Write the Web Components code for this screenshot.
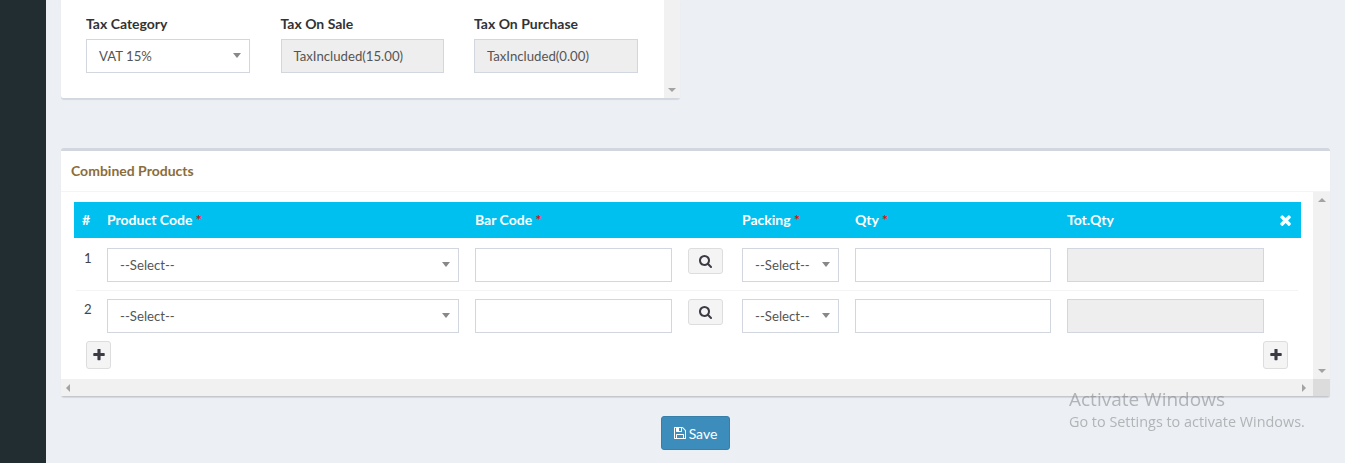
<!DOCTYPE html>
<html>
<head>
<meta charset="utf-8">
<style>
  html, body { margin: 0; height: 100%; overflow: hidden; background: #ecf0f5; }
  body { font-family: "Lato", "Liberation Sans", sans-serif; font-size: 14px; color: #444; }
</style>
</head>
<body>
<app-shell>
  <tax-card>
    <form-field label="Tax Category"><form-select>VAT 15%</form-select></form-field>
    <form-field label="Tax On Sale"><form-box disabled>TaxIncluded(15.00)</form-box></form-field>
    <form-field label="Tax On Purchase"><form-box disabled>TaxIncluded(0.00)</form-box></form-field>
  </tax-card>
  <products-card title-text="Combined Products">
    <product-row num="1"></product-row>
    <product-row num="2"></product-row>
  </products-card>
  <save-button></save-button>
</app-shell>
<activate-notice></activate-notice>

<script>
const ICONS = {
  search: ['0 0 1664 1664', 'M1152 704q0-185-131.5-316.5t-316.5-131.5-316.5 131.5-131.5 316.5 131.5 316.5 316.5 131.5 316.5-131.5 131.5-316.5zm512 832q0 52-38 90t-90 38q-54 0-90-38l-343-342q-179 124-399 124-143 0-273.5-55.5t-225-150-150-225-55.5-273.5 55.5-273.5 150-225 225-150 273.5-55.5 273.5 55.5 225 150 150 225 55.5 273.5q0 220-124 399l343 343q37 37 37 90z'],
  plus: ['160 160 1472 1472', 'M1600 736v192q0 40-28 68t-68 28h-416v416q0 40-28 68t-68 28h-192q-40 0-68-28t-28-68v-416h-416q-40 0-68-28t-28-68v-192q0-40 28-68t68-28h416v-416q0-40 28-68t68-28h192q40 0 68 28t28 68v416h416q40 0 68 28t28 68z'],
  times: ['200 240 1100 1320', 'M1298 1322q0 40-28 68l-136 136q-28 28-68 28t-68-28l-294-294-294 294q-28 28-68 28t-68-28l-136-136q-28-28-28-68t28-68l294-294-294-294q-28-28-28-68t28-68l136-136q28-28 68-28t68 28l294 294 294-294q28-28 68-28t68 28l136 136q28 28 28 68t-28 68l-294 294 294 294q28 28 28 68z'],
  save: ['0 128 1536 1536', 'M384 1536h768v-384h-768v384zm896 0h128v-896q0-14-10-38.5t-20-34.5l-281-281q-10-10-34-20t-39-10v416q0 40-28 68t-68 28h-576q-40 0-68-28t-28-68v-416h-128v1280h128v-416q0-40 28-68t68-28h832q40 0 68 28t28 68v416zm-384-928v-320q0-13-9.5-22.5t-22.5-9.5h-192q-13 0-22.5 9.5t-9.5 22.5v320q0 13 9.5 22.5t22.5 9.5h192q13 0 22.5-9.5t9.5-22.5zm640 32v928q0 40-28 68t-68 28h-1344q-40 0-68-28t-28-68v-1344q0-40 28-68t68-28h928q40 0 88 20t76 48l280 280q28 28 48 76t20 88z']
}

function icon (name, size, color) {
  const [box, d] = ICONS[name]
  return `<svg width="${size}" height="${size}" viewBox="${box}" fill="${color}" style="display:block"><path d="${d}"/></svg>`
}

class AppShell extends HTMLElement {
  constructor () {
    super()
    this.attachShadow({ mode: 'open' })
  }

  connectedCallback () {
    this.shadowRoot.innerHTML = `
      <style>
        :host { display: flex; height: 463px; }
        .sidebar { width: 46px; flex: none; background: #222d32; }
        .main {
          flex: 1;
          padding: 0 15px;
          display: flex;
          flex-direction: column;
          align-items: stretch;
        }
      </style>
      <div class="sidebar"></div>
      <div class="main"><slot></slot></div>
    `
  }
}

class ScrollArrow extends HTMLElement {
  constructor () {
    super()
    this.attachShadow({ mode: 'open' })
  }

  connectedCallback () {
    const dir = this.getAttribute('dir') || 'down'
    const sides = {
      down: 'border-left:4px solid transparent;border-right:4px solid transparent;border-top:4px solid #a3a3a3',
      up: 'border-left:4px solid transparent;border-right:4px solid transparent;border-bottom:4px solid #a3a3a3',
      left: 'border-top:4px solid transparent;border-bottom:4px solid transparent;border-right:4px solid #a3a3a3',
      right: 'border-top:4px solid transparent;border-bottom:4px solid transparent;border-left:4px solid #a3a3a3'
    }
    this.shadowRoot.innerHTML = `
      <style>
        :host { display: block; width: 0; height: 0; ${sides[dir]} }
      </style>
    `
  }
}

class TaxCard extends HTMLElement {
  constructor () {
    super()
    this.attachShadow({ mode: 'open' })
  }

  connectedCallback () {
    this.shadowRoot.innerHTML = `
      <style>
        :host {
          display: flex;
          width: 619px;
          height: 98px;
          margin-bottom: 49px;
          background: #fff;
          border-bottom: 1px solid #d2d6de;
          box-shadow: 0 1px 1px rgba(0, 0, 0, .1);
          border-radius: 0 0 3px 3px;
        }
        .fields {
          flex: 1;
          display: grid;
          grid-template-columns: 164px 163px 164px;
          column-gap: 30.5px;
          align-content: start;
          padding: 15px 0 0 25px;
        }
        .bar {
          width: 16px;
          flex: none;
          background: #f1f1f1;
          display: flex;
          justify-content: center;
          align-items: flex-end;
          padding-bottom: 6px;
          box-sizing: border-box;
        }
      </style>
      <div class="fields"><slot></slot></div>
      <div class="bar"><scroll-arrow dir="down"></scroll-arrow></div>
    `
  }
}

class FormField extends HTMLElement {
  constructor () {
    super()
    this.attachShadow({ mode: 'open' })
  }

  connectedCallback () {
    this.shadowRoot.innerHTML = `
      <style>
        :host { display: block; }
        label {
          display: block;
          height: 24px;
          line-height: 18px;
          font-weight: 700;
          font-size: 14px;
          color: #333;
        }
      </style>
      <label>${this.getAttribute('label')}</label>
      <slot></slot>
    `
  }
}

class FormBox extends HTMLElement {
  constructor () {
    super()
    this.attachShadow({ mode: 'open' })
  }

  connectedCallback () {
    this.shadowRoot.innerHTML = `
      <style>
        :host {
          display: flex;
          align-items: center;
          height: 34px;
          box-sizing: border-box;
          padding: 0 12px 1px;
          background: #fff;
          border: 1px solid #d2d6de;
          font-size: 13.2px;
          color: #555;
          white-space: nowrap;
        }
        :host([disabled]) { background: #eee; }
      </style>
      <slot></slot>
    `
  }
}

class FormSelect extends HTMLElement {
  constructor () {
    super()
    this.attachShadow({ mode: 'open' })
  }

  connectedCallback () {
    this.shadowRoot.innerHTML = `
      <style>
        :host {
          display: flex;
          align-items: center;
          justify-content: space-between;
          height: 34px;
          box-sizing: border-box;
          padding: 0 8px 1px 12px;
          background: #fff;
          border: 1px solid #d2d6de;
          font-size: 13.2px;
          color: #555;
          white-space: nowrap;
        }
        .caret {
          width: 0;
          height: 0;
          border-left: 4px solid transparent;
          border-right: 4px solid transparent;
          border-top: 5px solid #888;
        }
      </style>
      <slot></slot>
      <span class="caret"></span>
    `
  }
}

class IconButton extends HTMLElement {
  constructor () {
    super()
    this.attachShadow({ mode: 'open' })
  }

  connectedCallback () {
    const name = this.getAttribute('icon')
    const size = this.getAttribute('size') || 12
    this.shadowRoot.innerHTML = `
      <style>
        :host {
          display: flex;
          align-items: center;
          justify-content: center;
          box-sizing: border-box;
          background: #f4f4f4;
          border: 1px solid #ddd;
          border-radius: 3px;
        }
      </style>
      ${icon(name, size, '#3b3b45')}
    `
  }
}

class ProductsCard extends HTMLElement {
  constructor () {
    super()
    this.attachShadow({ mode: 'open' })
  }

  connectedCallback () {
    this.shadowRoot.innerHTML = `
      <style>
        :host {
          display: block;
          height: 249px;
          box-sizing: border-box;
          background: #fff;
          border-top: 3px solid #d2d6de;
          border-bottom: 1px solid #c4c8ce;
          box-shadow: 0 1px 1px rgba(0, 0, 0, .1);
          border-radius: 3px;
        }
        .title {
          height: 41px;
          box-sizing: border-box;
          padding-left: 10px;
          line-height: 39px;
          font-size: 14px;
          font-weight: 700;
          color: #8a6d3b;
          border-bottom: 1px solid #f4f4f4;
        }
        .frame {
          height: 204px;
          display: grid;
          grid-template-columns: 1fr 17px;
          grid-template-rows: 1fr 17px;
        }
        .content { padding: 10px 0 0 13px; min-width: 0; }
        .head, .foot { display: grid; width: 1227px; }
        .head {
          grid-template-columns: 33px 368px 213px 54px 113px 212px 197px 37px;
          height: 36px;
          margin-bottom: 2px;
          align-items: center;
          background: #00c0ef;
          color: #fff;
          font-weight: 700;
          font-size: 14px;
        }
        .head span { padding-bottom: 1px; }
        .head span:first-child { padding-left: 8px; }
        .head i { color: #f00; font-style: normal; font-size: 14px; }
        .head .x { display: flex; padding-left: 16px; padding-bottom: 0; }
        .foot {
          grid-template-columns: 1fr 25px 13px;
        }
        .foot icon-button { width: 25px; height: 28px; }
        .foot icon-button:first-child { margin-left: 12px; grid-column: 1; }
        .vbar, .hbar { background: #f1f1f1; display: flex; align-items: center; justify-content: space-between; }
        .vbar { flex-direction: column; padding: 6px 0; box-sizing: border-box; }
        .hbar { padding: 0 7px 0 5px; }
        .corner { background: #dcdcdc; }
      </style>
      <div class="title">${this.getAttribute('title-text')}</div>
      <div class="frame">
        <div class="content">
          <div class="head">
            <span>#</span>
            <span>Product Code <i>*</i></span>
            <span>Bar Code <i>*</i></span>
            <span></span>
            <span>Packing <i>*</i></span>
            <span>Qty <i>*</i></span>
            <span>Tot.Qty</span>
            <span class="x">${icon('times', 12, '#fff')}</span>
          </div>
          <slot></slot>
          <div class="foot">
            <icon-button icon="plus" size="12"></icon-button>
            <icon-button icon="plus" size="12"></icon-button>
          </div>
        </div>
        <div class="vbar"><scroll-arrow dir="up"></scroll-arrow><scroll-arrow dir="down"></scroll-arrow></div>
        <div class="hbar"><scroll-arrow dir="left"></scroll-arrow><scroll-arrow dir="right"></scroll-arrow></div>
        <div class="corner"></div>
      </div>
    `
  }
}

class ProductRow extends HTMLElement {
  constructor () {
    super()
    this.attachShadow({ mode: 'open' })
  }

  connectedCallback () {
    this.shadowRoot.innerHTML = `
      <style>
        :host {
          display: grid;
          width: 1222px;
          margin-left: 2px;
          grid-template-columns: 31px 368px 213px 54px 113px 212px 197px 34px;
          padding: 8px 0;
          border-bottom: 1px solid #f4f4f4;
          box-sizing: border-box;
          height: 51px;
          font-size: 13.2px;
          color: #444;
        }
        :host(:last-of-type) { border-bottom: 0; height: 50px; }
        .num { padding: 2px 0 0 8px; line-height: 17px; }
        .wide { width: 352px; }
        .bar, .qty, .tot { width: 197px; }
        .qty { width: 196px; }
        .pack { width: 97px; }
        .find { width: 35px; height: 26px; }
      </style>
      <span class="num">${this.getAttribute('num')}</span>
      <form-select class="wide">--Select--</form-select>
      <form-box class="bar"></form-box>
      <icon-button class="find" icon="search" size="13"></icon-button>
      <form-select class="pack">--Select--</form-select>
      <form-box class="qty"></form-box>
      <form-box class="tot" disabled></form-box>
    `
  }
}

class SaveButton extends HTMLElement {
  constructor () {
    super()
    this.attachShadow({ mode: 'open' })
  }

  connectedCallback () {
    this.shadowRoot.innerHTML = `
      <style>
        :host {
          display: flex;
          align-self: center;
          align-items: center;
          gap: 3px;
          margin-top: 19px;
          height: 34px;
          width: 69px;
          box-sizing: border-box;
          justify-content: center;
          background: #3c8dbc;
          border: 1px solid #367fa9;
          border-radius: 3px;
          color: #fff;
          font-size: 14px;
          font-weight: 400;
        }
      </style>
      ${icon('save', 12, '#fff')}<span>Save</span>
    `
  }
}

class ActivateNotice extends HTMLElement {
  constructor () {
    super()
    this.attachShadow({ mode: 'open' })
  }

  connectedCallback () {
    this.shadowRoot.innerHTML = `
      <style>
        :host {
          position: fixed;
          left: 1069px;
          top: 387px;
          font-family: "Open Sans", "Noto Sans", sans-serif;
          color: rgba(120, 120, 120, .5);
          white-space: nowrap;
          pointer-events: none;
        }
        .big { font-size: 19px; line-height: 25px; }
        .small { font-size: 14.4px; line-height: 20px; }
      </style>
      <div class="big">Activate Windows</div>
      <div class="small">Go to Settings to activate Windows.</div>
    `
  }
}

customElements.define('app-shell', AppShell)
customElements.define('scroll-arrow', ScrollArrow)
customElements.define('tax-card', TaxCard)
customElements.define('form-field', FormField)
customElements.define('form-box', FormBox)
customElements.define('form-select', FormSelect)
customElements.define('icon-button', IconButton)
customElements.define('products-card', ProductsCard)
customElements.define('product-row', ProductRow)
customElements.define('save-button', SaveButton)
customElements.define('activate-notice', ActivateNotice)
</script>
</body>
</html>
